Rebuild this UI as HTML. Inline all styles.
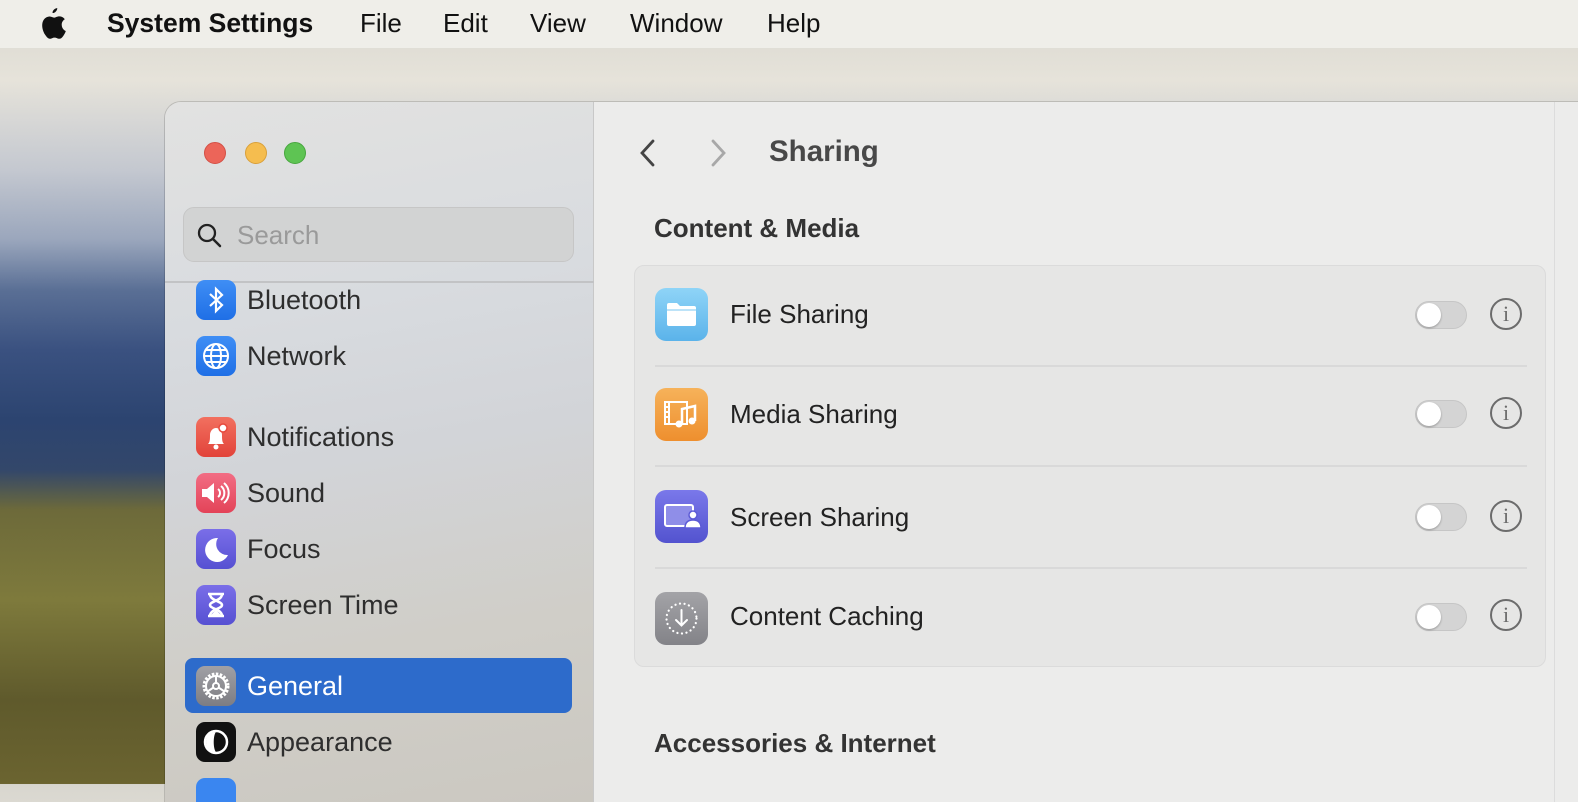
<!DOCTYPE html>
<html><head><meta charset="utf-8"><style>
*{margin:0;padding:0;box-sizing:border-box}
body{width:1578px;height:784px;overflow:hidden;position:relative;font-family:"Liberation Sans",sans-serif;
background:linear-gradient(180deg,#d8d6cf 0px,#e6e3da 80px,#c4c8d0 170px,#9aa6bc 240px,#5a6f95 290px,#3a5180 350px,#2c4470 420px,#33476a 470px,#6d6a3a 510px,#7e7a3c 600px,#5f5a2c 700px,#6b6430 784px)}
.menubar{position:absolute;left:0;top:0;width:1578px;height:48px;background:#efeee9;font-size:26px;color:#111}
.menubar span{position:absolute;top:8px}
.win{position:absolute;left:165px;top:102px;width:1450px;height:700px;border-radius:16px 0 0 0;overflow:hidden;box-shadow:0 0 0 1px rgba(0,0,0,.15)}
.side{position:absolute;left:0;top:0;width:429px;height:100%;background:linear-gradient(170deg,#e2e2e1 0%,#d8dbdf 30%,#d2d4d8 50%,#d0cec8 75%,#cbc8c1 100%);border-right:1px solid #c8c8c8}
.content{position:absolute;left:429px;top:0;right:0;height:100%;background:#ececeb}
.dot{position:absolute;top:40px;width:22px;height:22px;border-radius:50%}
.search{position:absolute;left:18px;top:105px;width:391px;height:55px;border-radius:11px;background:#d2d3d3;border:1px solid #c6c6c6}
.item{position:absolute;left:31px;width:40px;height:40px;border-radius:9px}
.lbl{position:absolute;left:82px;font-size:27px;color:#2e2e2e}
.card{position:absolute;left:40px;top:163px;width:912px;height:402px;background:#e6e6e5;border:1px solid #dbdbdb;border-radius:10px}
.row{position:absolute;left:20px;width:53px;height:53px;border-radius:11px}
.rl{position:absolute;left:95px;font-size:26px;color:#222}
.sep{position:absolute;left:20px;width:872px;height:2px;background:#d9d9d9}
.tog{position:absolute;left:780px;width:52px;height:28px;border-radius:14px;background:#d4d4d4;border:1px solid #c6c6c6}
.tog::after{content:"";position:absolute;left:1px;top:1px;width:24px;height:24px;border-radius:50%;background:#fff;box-shadow:0 1px 2px rgba(0,0,0,.3)}
.info{position:absolute;left:855px;width:32px;height:32px;border-radius:50%;border:2px solid #6c6c6c;color:#6c6c6c;font-family:"Liberation Serif",serif;font-size:22px;text-align:center;line-height:28px}
</style></head><body>
<div class="menubar">
<svg style="position:absolute;left:39px;top:7px" width="30" height="33" viewBox="5 1 22 30"><path fill="#111" d="M19 2c0 2-1.800 4.500-4.300 4.500C14.500 4.200 16.500 2.200 19 2zM23 17c0-3.300 2.700-4.800 2.800-4.900-1.500-2.300-3.900-2.600-4.700-2.600-2-.2-3.900 1.200-4.900 1.200-1 0-2.600-1.200-4.300-1.100C9.600 9.700 7.600 11 6.400 13c-2.400 4.100-.6 10.200 1.700 13.500 1.100 1.600 2.500 3.500 4.200 3.400 1.700-.1 2.300-1.100 4.300-1.100s2.600 1.100 4.300 1.100c1.800 0 2.900-1.600 4-3.300 1.300-1.900 1.800-3.700 1.800-3.800-.1 0-3.700-1.400-3.700-5.800z"/></svg>
<span style="left:107px;font-weight:bold;font-size:26.5px">System Settings</span>
<span style="left:360px">File</span><span style="left:443px">Edit</span><span style="left:530px">View</span><span style="left:630px">Window</span><span style="left:767px">Help</span>
</div>
<div class="win">
<div class="side">
<div class="dot" style="left:39px;background:#ec6559;border:1px solid #d34f45"></div>
<div class="dot" style="left:80px;background:#f5bd4f;border:1px solid #d9a03a"></div>
<div class="dot" style="left:119px;background:#5ec453;border:1px solid #47a63e"></div>
<div class="search"><svg style="position:absolute;left:12px;top:14px" width="28" height="28" viewBox="0 0 28 28"><circle cx="11" cy="11" r="8" fill="none" stroke="#222" stroke-width="2.3"/><path d="M17 17l7 7" stroke="#222" stroke-width="2.5" stroke-linecap="round"/></svg><span style="position:absolute;left:53px;top:12px;font-size:26px;color:#9a9a9a">Search</span></div>
<div style="position:absolute;left:0;top:179px;width:429px;height:2px;background:#c2c3c5"></div>
<div class="item" style="top:178px;background:linear-gradient(#3f8ef5,#1f6fe6);height:40px"><svg width="40" height="40" viewBox="0 0 40 40"><path d="M14 14l12 11-6 6V9l6 6-12 11" fill="none" stroke="#fff" stroke-width="2.2"/></svg></div>
<div class="lbl" style="top:183px">Bluetooth</div>
<div class="item" style="top:234px;background:linear-gradient(#3f8ef5,#1f6fe6)"><svg width="40" height="40" viewBox="0 0 40 40"><g fill="none" stroke="#fff" stroke-width="2"><circle cx="20" cy="20" r="12"/><ellipse cx="20" cy="20" rx="5" ry="12"/><path d="M8 20h24M10 14h20M10 26h20"/></g></svg></div>
<div class="lbl" style="top:239px">Network</div>
<div class="item" style="top:315px;background:linear-gradient(#f2705f,#e2433a)"><svg width="40" height="40" viewBox="0 0 40 40"><path d="M12 27c2-2 2-5 2-9 0-4 3-7 6-7s6 3 6 7c0 4 0 7 2 9z" fill="#fff"/><circle cx="20" cy="30" r="2.5" fill="#fff"/><circle cx="27" cy="11" r="4" fill="#fff" stroke="#e8493d" stroke-width="1.5"/></svg></div>
<div class="lbl" style="top:320px">Notifications</div>
<div class="item" style="top:371px;background:linear-gradient(#f26d84,#e34358)"><svg width="40" height="40" viewBox="0 0 40 40"><path d="M6 16h5l7-6v20l-7-6H6z" fill="#fff"/><path d="M22 16a5 5 0 010 8M25 13a9 9 0 010 14M28 10a13 13 0 010 20" fill="none" stroke="#fff" stroke-width="2"/></svg></div>
<div class="lbl" style="top:376px">Sound</div>
<div class="item" style="top:427px;background:linear-gradient(#7a6ee8,#5650d2)"><svg width="40" height="40" viewBox="0 0 40 40"><path d="M22 9a12 12 0 1010 17A11 11 0 0122 9z" fill="#fff"/></svg></div>
<div class="lbl" style="top:432px">Focus</div>
<div class="item" style="top:483px;background:linear-gradient(#7a6ee8,#5650d2)"><svg width="40" height="40" viewBox="0 0 40 40"><path d="M12 9h16M12 31h16M14 9c0 7 12 7 12 11s-12 4-12 11M26 9c0 7-12 7-12 11s12 4 12 11" fill="none" stroke="#fff" stroke-width="2.5"/><path d="M15 30l5-5 5 5z" fill="#fff"/></svg></div>
<div class="lbl" style="top:488px">Screen Time</div>
<div style="position:absolute;left:20px;top:556px;width:387px;height:55px;border-radius:8px;background:#2d6bcb"></div>
<div class="item" style="top:564px;background:linear-gradient(#a0a0a5,#7d7d83)"><svg width="40" height="40" viewBox="0 0 40 40"><g fill="none" stroke="#fff" stroke-width="2"><circle cx="20" cy="20" r="12" stroke-dasharray="2.5 1.5" stroke-width="3"/><circle cx="20" cy="20" r="10"/><circle cx="20" cy="20" r="3"/><path d="M20 17V10M17.5 21.5l-6 4M22.5 21.5l6 4"/></g></svg></div>
<div class="lbl" style="top:569px;color:#fff">General</div>
<div class="item" style="top:620px;background:#111"><svg width="40" height="40" viewBox="0 0 40 40"><circle cx="20" cy="20" r="11" fill="none" stroke="#fff" stroke-width="2.5"/><path d="M20 10a10 10 0 000 20c-3-3-3-17 0-20z" fill="#fff"/></svg></div>
<div class="lbl" style="top:625px">Appearance</div>
<div class="item" style="top:676px;background:#3a86f0"></div>
</div>
<div class="content">
<svg style="position:absolute;left:44px;top:36px" width="20" height="30" viewBox="0 0 20 30"><path d="M15 3L4 15l11 12" fill="none" stroke="#444" stroke-width="2.8" stroke-linecap="round"/></svg>
<svg style="position:absolute;left:114px;top:36px" width="20" height="30" viewBox="0 0 20 30"><path d="M5 3l11 12L5 27" fill="none" stroke="#a8a8a8" stroke-width="2.8" stroke-linecap="round"/></svg>
<div style="position:absolute;left:175px;top:33px;font-size:29.5px;font-weight:bold;color:#484848">Sharing</div>
<div style="position:absolute;left:60px;top:111px;font-size:26px;font-weight:bold;color:#333">Content &amp; Media</div>
<div class="card">
<div class="row" style="top:22px;background:linear-gradient(#8fd4f7,#5bb3ea)"><svg width="53" height="53" viewBox="0 0 53 53"><path d="M12 17q0-2 2-2h8l3 3h14q2 0 2 2v16q0 2-2 2H14q-2 0-2-2z" fill="#fff"/><path d="M12 22h29" stroke="#a7daf5" stroke-width="1.5"/></svg></div>
<div class="rl" style="top:33px">File Sharing</div>
<div class="tog" style="top:35px"></div><div class="info" style="top:32px">i</div>
<div class="sep" style="top:99px"></div>
<div class="row" style="top:122px;background:linear-gradient(#f6b25a,#ee8f2e)"><svg width="53" height="53" viewBox="0 0 53 53"><rect x="10" y="14" width="22" height="22" fill="none" stroke="#fff" stroke-width="2"/><path d="M10 19h4M10 24h4M10 29h4M14 14v22" stroke="#fff" stroke-width="2"/><path d="M27 36V21l13-3v15" fill="none" stroke="#fff" stroke-width="2.5"/><circle cx="24" cy="36" r="3.5" fill="#fff"/><circle cx="37" cy="33" r="3.5" fill="#fff"/></svg></div>
<div class="rl" style="top:133px">Media Sharing</div>
<div class="tog" style="top:134px"></div><div class="info" style="top:131px">i</div>
<div class="sep" style="top:199px"></div>
<div class="row" style="top:224px;background:linear-gradient(#7a78ea,#5353cf)"><svg width="53" height="53" viewBox="0 0 53 53"><rect x="10" y="15" width="28" height="21" rx="2" fill="#8f8ee8" stroke="#fff" stroke-width="2"/><circle cx="38" cy="25" r="4" fill="#fff" stroke="#5d5bd6" stroke-width="1.5"/><path d="M30 38q0-8 8-8t8 8z" fill="#fff" stroke="#5d5bd6" stroke-width="1.5"/></svg></div>
<div class="rl" style="top:236px">Screen Sharing</div>
<div class="tog" style="top:237px"></div><div class="info" style="top:234px">i</div>
<div class="sep" style="top:301px"></div>
<div class="row" style="top:326px;background:linear-gradient(#a3a3a7,#838388)"><svg width="53" height="53" viewBox="0 0 53 53"><circle cx="26.5" cy="26.5" r="15" fill="none" stroke="#fff" stroke-width="2.2" stroke-dasharray="0.1 4.5" stroke-linecap="round"/><path d="M26.5 18v15M21 28l5.5 5.5L32 28" fill="none" stroke="#fff" stroke-width="2" stroke-linecap="round"/></svg></div>
<div class="rl" style="top:335px">Content Caching</div>
<div class="tog" style="top:337px"></div><div class="info" style="top:333px">i</div>
</div>
<div style="position:absolute;left:960px;top:0;width:1px;height:100%;background:#dcdcdc"></div>
<div style="position:absolute;left:60px;top:626px;font-size:26px;font-weight:bold;color:#333">Accessories &amp; Internet</div>
</div>
</div>
</body></html>
